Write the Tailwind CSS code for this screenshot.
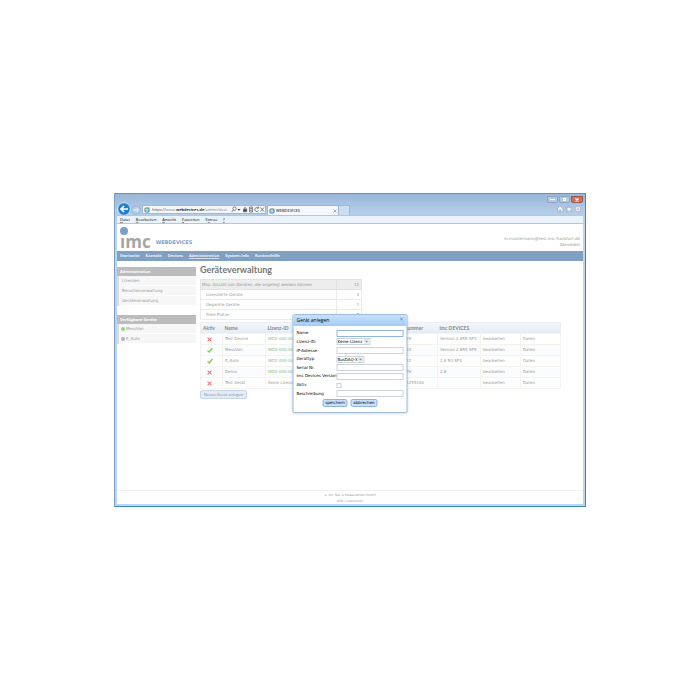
<!DOCTYPE html>
<html lang="de">
<head>
<meta charset="utf-8">
<title>WEBDEVICES</title>
<script src="https://cdn.jsdelivr.net/npm/@tailwindcss/browser@4"></script>
</head>
<body class="bg-white px-[114px] pt-[193px] font-['Open_Sans',sans-serif] text-[5px] leading-[8px] text-[#999]">
<div class="relative flex flex-col border border-t-[#7a8fa6] border-l-[#7d9fc2] border-r-[#3b8fae] border-b-[#3b8fae] bg-[#bdd4ee]">
  <header class="flex h-[30px] flex-col bg-linear-to-b from-[#98b6d8] via-[#b0cae7] to-[#bdd4ee] text-black">
    <div class="flex h-[9px] items-start justify-end gap-px pt-[2px] pr-[2px]">
      <button aria-label="Minimieren" class="flex h-[7px] w-[11px] items-center justify-center rounded-b-xs border border-[#8fa6c2] bg-[#b4cae3]"><span class="h-px w-[5px] bg-white"></span></button>
      <button aria-label="Maximieren" class="flex h-[7px] w-[11px] items-center justify-center rounded-b-xs border border-[#8fa6c2] bg-[#b4cae3]"><span class="size-[3px] border border-white"></span></button>
      <button aria-label="Schließen" class="flex h-[7px] w-[12px] items-center justify-center rounded-b-xs border border-[#96594c] bg-[#d2705a]"><svg class="size-[4px]" viewBox="0 0 4 4" stroke="#fff" stroke-width="1.2"><path d="M.5.5l3 3m0-3l-3 3"/></svg></button>
    </div>
    <div class="flex h-[12px] items-end pl-[2px]">
      <button aria-label="Zurück" class="h-[13px] w-[14px]"><svg viewBox="0 0 14 14" class="size-[14px]"><circle cx="7" cy="7" r="6.3" fill="#1f80cf" stroke="#e4effa" stroke-width=".8"/><path d="M11 7H4m3-3L4 7l3 3" fill="none" stroke="#fff" stroke-width="1.7"/></svg></button>
      <button aria-label="Vorwärts" class="mr-px h-[11px] w-[10px]"><svg viewBox="0 0 10 10" class="size-[10px]"><circle cx="5" cy="5" r="4.3" fill="#b5cde6" stroke="#8eabc9" stroke-width=".7"/><path d="M2.5 5h5m-2-2l2 2-2 2" fill="none" stroke="#eaf3fb" stroke-width="1"/></svg></button>
      <div class="mb-px flex h-[9px] w-[124px] items-center gap-[2px] border border-[#a3b8d0] bg-[#f3f7fc] pl-px">
        <svg viewBox="0 0 8 8" class="size-[6px] shrink-0"><circle cx="4" cy="4" r="2.8" fill="none" stroke="#3a9be0" stroke-width="1.6"/><path d="M2 4h4.5" stroke="#3a9be0" stroke-width="1"/><path d="M.6 6.500C0 4 4 .5 7.500 1" fill="none" stroke="#edbd3b" stroke-width="1"/></svg>
        <span class="w-[78px] text-[4px] whitespace-nowrap text-[#444]">https://<span class="text-[#888]">www.</span><b class="font-semibold text-black">webdevices.de</b><span class="text-[#888]">/admin/devi</span></span>
        <svg viewBox="0 0 34 7" class="h-[7px] w-[34px] shrink-0" fill="none" stroke="#555" stroke-width=".7"><circle cx="3.500" cy="2.600" r="1.700"/><path d="M2.300 3.900L.6 6"/><path d="M6.500 3h3L8 4.700z" fill="#333" stroke="none"/><path d="M12.500 3.300h3.200v2.400h-3.200z" fill="#444"/><path d="M13.100 3.300V2.100q1-1.400 2 0v1.200M18.500 1h3v5h-3zM19 2.600h2M19 4.300h2M27 2A2 2 0 1 0 27.500 4.500M25.800 2.200h1.700V.7M29.500 1.500l3.500 4M33 1.500L29.500 5.500"/></svg>
      </div>
      <div class="ml-px flex h-[10px] w-[72px] items-center gap-px border border-b-0 border-[#9fb6cf] bg-[#f5f9fd] px-px">
        <svg viewBox="0 0 8 8" class="size-[6px]"><circle cx="4" cy="4" r="2.8" fill="none" stroke="#3a9be0" stroke-width="1.6"/><path d="M2 4h4.5" stroke="#3a9be0" stroke-width="1"/><path d="M.6 6.500C0 4 4 .5 7.500 1" fill="none" stroke="#edbd3b" stroke-width="1"/></svg>
        <span class="grow text-[4px]">WEBDEVICES</span>
        <svg class="size-[4px]" viewBox="0 0 4 4" stroke="#777" stroke-width=".6"><path d="M.5.5l3 3m0-3l-3 3"/></svg>
      </div>
      <div class="h-[10px] w-[11px] border border-b-0 border-l-0 border-[#9fb6cf] bg-[#cbdef2]"></div>
      <svg viewBox="0 0 26 8" class="mr-[3px] mb-[2px] ml-auto h-[8px] w-[26px]" fill="#f5f8fc" stroke="#8fa3b8" stroke-width=".6"><path d="M1 4l3-3 3 3v3H5V5H3.500v2H2V4z"/><path d="M13 .8l1 2.200 2.400.2-1.800 1.600.6 2.400L13 6l-2.200 1.200.6-2.400-1.800-1.600 2.400-.2z"/><circle cx="22" cy="4" r="2.800"/><circle cx="22" cy="4" r="1"/></svg>
    </div>
    <nav aria-label="Menü" class="mx-[2px] flex h-[9px] items-center gap-[6px] border-y border-[#b5c7da] bg-[#eaf3fc] px-[3px] text-[4px] text-black [&_u]:decoration-black/40">
      <a href="#"><u>D</u>atei</a><a href="#"><u>B</u>earbeiten</a><a href="#"><u>A</u>nsicht</a><a href="#"><u>F</u>avoriten</a><a href="#">E<u>x</u>tras</a><a href="#"><u>?</u></a>
    </nav>
  </header>

  <div class="mx-[2px] mb-[2px] flex flex-col bg-white">
    <div class="flex h-[27px] items-end justify-between px-[3px]">
      <div class="flex items-end gap-[5px]">
        <div class="flex flex-col items-start">
          <span class="size-[8px] rounded-full bg-[#7c9fc5]"></span>
          <span class="h-[16px] text-[17px] leading-[13px] font-bold text-[#a6a6a8]">ımc</span>
        </div>
        <span class="mb-[5px] font-['DejaVu_Sans',sans-serif] text-[5px] font-bold text-[#7c9fc5]">WEBDEVICES</span>
      </div>
      <div class="flex flex-col pb-[3px] text-right font-['DejaVu_Sans',sans-serif] text-[4px] leading-[6px]">
        <span>m.mustermann@test.imc-frankfurt.de</span><a href="#">Abmelden</a>
      </div>
    </div>
    <nav class="flex h-[10px] items-center gap-[6px] bg-[#7f9fc3] px-[3px] text-[4px] font-bold text-[#edf3f9]">
      <a href="#">Startseite</a><a href="#">Kontakt</a><a href="#">Devices</a><a href="#" class="underline decoration-white/60">Administration</a><a href="#">System-Info</a><a href="#">Kontexthilfe</a>
    </nav>
    <div class="flex min-h-[229px] gap-[4px]">
      <aside class="w-[79px] shrink-0 pt-[6px] font-['DejaVu_Sans',sans-serif] text-[4px]">
        <h2 class="h-[9px] bg-[#bcbcbc] px-[3px] font-['Open_Sans',sans-serif] leading-[10px] font-bold text-white">Administration</h2>
        <ul class="border-l-2 border-[#ddd] bg-[#f7f7f7] pl-[3px] leading-[9px]">
          <li class="border-b border-white"><a href="#">Lizenzen</a></li><li class="border-b border-white"><a href="#">Benutzerverwaltung</a></li><li class="border-b border-white"><a href="#">Geräteverwaltung</a></li>
        </ul>
        <h2 class="mt-[9px] h-[9px] bg-[#bcbcbc] px-[3px] font-['Open_Sans',sans-serif] leading-[10px] font-bold text-white">Verfügbare Geräte</h2>
        <ul class="border-l-2 border-[#ddd] bg-[#f7f7f7] pl-[2px] leading-[9px]">
          <li class="flex items-center gap-px border-b border-white"><span class="size-[4px] rounded-full bg-[#8be06a]"></span><a href="#">MessVan</a></li>
          <li class="flex items-center gap-px border-b border-white"><span class="size-[4px] rounded-full bg-[#b5b5b5]"></span><a href="#">E_Auto</a></li>
        </ul>
      </aside>
      <main class="min-w-0 grow pt-[3px] pr-[22px]">
        <h1 class="h-[15px] font-['Lato',sans-serif] text-[9px] leading-[12px] font-bold text-[#777]">Geräteverwaltung</h1>
        <table class="w-[162px] border-collapse font-['DejaVu_Sans',sans-serif] text-[4px] leading-[9px]">
          <tbody>
            <tr class="bg-[#ededed]"><td class="border border-[#e2e2e2] px-px">Max. Anzahl von Geräten, die angelegt werden können</td><td class="w-[25px] border border-[#e2e2e2] px-[2px] text-right">12</td></tr>
            <tr><td class="border border-[#ebebeb] px-[5px]">Lizenzierte Geräte</td><td class="border border-[#ebebeb] px-[2px] text-right">4</td></tr>
            <tr><td class="border border-[#ebebeb] px-[5px]">Geparkte Geräte</td><td class="border border-[#ebebeb] px-[2px] text-right">1</td></tr>
            <tr><td class="border border-[#ebebeb] px-[5px]">Freie Plätze</td><td class="border border-[#ebebeb] px-[2px] text-right">7</td></tr>
          </tbody>
        </table>
        <table class="mt-[2px] w-full table-fixed border-collapse border border-[#eee] font-['DejaVu_Sans',sans-serif] text-[4px] leading-[10px] whitespace-nowrap [&_td]:border [&_td]:border-[#f5f3ee] [&_td]:px-[2px] [&_th]:px-[2px]">
          <colgroup><col class="w-[22px]"><col class="w-[43px]"><col class="w-[123px]"><col class="w-[49px]"><col class="w-[43px]"><col class="w-[40px]"><col></colgroup>
          <thead><tr class="h-[10px] bg-linear-to-b from-[#f4f7fb] to-[#e4ebf3] text-left font-['Lato',sans-serif] text-[5px] text-[#888]"><th>Aktiv</th><th>Name</th><th>Lizenz-ID</th><th>Seriennummer</th><th>imc DEVICES</th><th></th><th></th></tr></thead>
          <tbody>
            <tr><td><svg viewBox="0 0 6 6" class="ml-[4px] size-[5px]" stroke="#ee7777" stroke-width="1.300"><path d="M.7.7L5.300 5.300M5.300.7L.7 5.300"/></svg></td><td>Test-Device</td><td class="text-[#8cb98c]">WD2-000-001</td><td>14000029</td><td>Version 2.8R5 SP3</td><td><a href="#">bearbeiten</a></td><td><a href="#">Daten</a></td></tr>
            <tr class="bg-[#fafcfd]"><td><svg viewBox="0 0 6 6" class="ml-[4px] size-[6px]" fill="none" stroke="#8fc45a" stroke-width="1.300"><path d="M.5 3.500L2.200 5 5.500 1"/></svg></td><td>MessVan</td><td class="text-[#8cb98c]">WD2-000-002</td><td>14000023</td><td>Version 2.8R5 SP5</td><td><a href="#">bearbeiten</a></td><td><a href="#">Daten</a></td></tr>
            <tr><td><svg viewBox="0 0 6 6" class="ml-[4px] size-[6px]" fill="none" stroke="#8fc45a" stroke-width="1.300"><path d="M.5 3.500L2.200 5 5.500 1"/></svg></td><td>E_Auto</td><td class="text-[#8cb98c]">WD2-000-003</td><td>14000012</td><td>2.8 R3 SP4</td><td><a href="#">bearbeiten</a></td><td><a href="#">Daten</a></td></tr>
            <tr class="bg-[#fafcfd]"><td><svg viewBox="0 0 6 6" class="ml-[4px] size-[5px]" stroke="#ee7777" stroke-width="1.300"><path d="M.7.7L5.300 5.300M5.300.7L.7 5.300"/></svg></td><td>Demo</td><td class="text-[#8cb98c]">WD2-000-004</td><td>14000076</td><td>2.8</td><td><a href="#">bearbeiten</a></td><td><a href="#">Daten</a></td></tr>
            <tr><td><svg viewBox="0 0 6 6" class="ml-[4px] size-[5px]" stroke="#ee7777" stroke-width="1.300"><path d="M.7.7L5.300 5.300M5.300.7L.7 5.300"/></svg></td><td>Test Gerät</td><td>Keine Lizenz</td><td>0000001255100</td><td></td><td><a href="#">bearbeiten</a></td><td><a href="#">Daten</a></td></tr>
          </tbody>
        </table>
        <button class="mt-px block h-[9px] w-[47px] rounded-xs border border-[#c4d6e8] bg-[#e2edf8] text-center text-[4px] leading-[7px] whitespace-nowrap text-[#888]">Neues Gerät anlegen</button>
      </main>
    </div>
    <footer class="border-t border-[#f2f2f2] pt-px text-center font-['DejaVu_Sans',sans-serif] text-[3px] leading-[6px] text-[#999]">
      <p>© imc Test &amp; Measurement GmbH</p><p>AGB | Impressum</p>
    </footer>
  </div>

  <form role="dialog" aria-labelledby="dlg" class="absolute top-[120px] left-1/2 w-[115px] -translate-x-1/2 rounded-xs border border-[#9dbde0] bg-white pb-[5px] font-['DejaVu_Sans',sans-serif] text-[4px] text-black shadow-sm">
    <div class="flex h-[11px] items-center justify-between bg-linear-to-b from-[#c8e1fb] to-[#9fcdf8] px-[3px]">
      <h2 id="dlg" class="font-['Open_Sans',sans-serif] text-[5px] leading-[7px]">Gerät anlegen</h2><button type="button" aria-label="Schließen" class="pb-[3px]"><svg class="size-[4px]" viewBox="0 0 4 4" stroke="#668" stroke-width=".6"><path d="M.5.5l3 3m0-3l-3 3"/></svg></button>
    </div>
    <div class="mt-[3px] grid h-[69px] auto-rows-fr grid-cols-[40px_1fr] items-center px-[3px] leading-[6px] [&>input[type=text]]:h-[7px] [&>input[type=text]]:min-w-0 [&>input[type=text]]:border [&>input[type=text]]:border-[#ccd3dc] [&>input[type=text]:first-of-type]:border-[#8fb6e0] [&>label]:whitespace-nowrap">
      <label for="f1">Name</label><input id="f1" type="text">
      <label for="f2">Lizenz-ID:</label>
      <div class="relative w-[34px]"><select id="f2" class="block h-[7px] w-full appearance-none border border-[#ccd3dc] bg-white leading-[5px]"><option>Keine Lizenz</option></select><svg viewBox="0 0 6 5" class="pointer-events-none absolute top-px right-px h-[5px] w-[6px]"><path d="M0 0h6v5H0z" fill="#e6ecf4"/><path d="M1.500 1.700h3L3 3.500z" fill="#889"/></svg></div>
      <label for="f3">IP-Adresse</label><input id="f3" type="text">
      <label for="f4">Gerättyp</label>
      <div class="relative w-[28px]"><select id="f4" class="block h-[7px] w-full appearance-none border border-[#ccd3dc] bg-white leading-[5px]"><option>BusDAQ-X</option></select><svg viewBox="0 0 6 5" class="pointer-events-none absolute top-px right-px h-[5px] w-[6px]"><path d="M0 0h6v5H0z" fill="#e6ecf4"/><path d="M1.500 1.700h3L3 3.500z" fill="#889"/></svg></div>
      <label for="f5">Serial Nr.</label><input id="f5" type="text">
      <label for="f6">imc Devices Version</label><input id="f6" type="text">
      <label for="f7">Aktiv</label><input id="f7" type="checkbox" class="size-[5px] appearance-none border border-[#ccd3dc]">
      <label for="f8">Beschreibung</label><input id="f8" type="text">
    </div>
    <div class="mt-px flex justify-center gap-[3px]">
      <button type="button" class="h-[8px] w-[25px] rounded-xs border border-[#8fb3dc] bg-[#c9e0f8] leading-[6px]">speichern</button>
      <button type="button" class="h-[8px] w-[27px] rounded-xs border border-[#8fb3dc] bg-[#c9e0f8] leading-[6px]">abbrechen</button>
    </div>
  </form>
</div>
</body>
</html>
